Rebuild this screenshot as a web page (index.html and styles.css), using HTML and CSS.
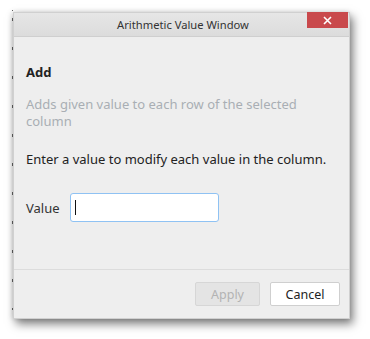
FILE: index.html
```html
<!DOCTYPE html>
<html lang="en">
<head>
    <meta charset="UTF-8">
    <title>Arithmetic Value Window</title>
    <link rel="stylesheet" href="styles.css">
</head>
<body>
    <div class="ticks"></div>
    <div class="window">
        <div class="titlebar">
            <span class="title">Arithmetic Value Window</span>
            <button class="close-btn" aria-label="Close">
                <svg width="9" height="9" viewBox="0 0 9 9">
                    <path d="M1 1 L8 8 M8 1 L1 8" stroke="#fff" stroke-width="1.6" fill="none"/>
                </svg>
            </button>
        </div>

        <div class="content">
            <h2 class="op-name">Add</h2>
            <p class="op-desc">Adds given value to each row of the selected column</p>
            <p class="prompt">Enter a value to modify each value in the column.</p>
            <div class="value-row">
                <label for="valueInput">Value</label>
                <div class="value-input" id="valueInput"><span class="caret"></span></div>
            </div>
        </div>

        <div class="footer">
            <button class="btn btn-disabled" disabled>Apply</button>
            <button class="btn">Cancel</button>
        </div>
    </div>
</body>
</html>
```

FILE: styles.css
```css
* {
    margin: 0;
    padding: 0;
    box-sizing: border-box;
    font-family: 'Noto Sans', 'Open Sans', sans-serif;
}

body {
    width: 370px;
    height: 339px;
    background: #fff;
    display: flex;
    align-items: flex-start;
    padding: 12px 0 0 12px;
    overflow: hidden;
}

.ticks {
    width: 1px;
    height: 300px;
    margin-top: -2px;
    background: repeating-linear-gradient(to bottom,
        #666 0, #666 3px, transparent 3px, transparent 29px);
    background-position: 0 8px;
}

.window {
    position: relative;
    width: 337px;
    height: 307px;
    display: flex;
    flex-direction: column;
    background: #eeeeee;
    border: 1px solid #d0d0d0;
    box-shadow: 3px 5px 9px rgba(0, 0, 0, 0.5), -1px 0 5px rgba(0, 0, 0, 0.15);
}

.titlebar {
    height: 24px;
    flex-shrink: 0;
    display: flex;
    justify-content: center;
    align-items: center;
    background: linear-gradient(#e6e6e6, #dcdcdc);
    border-bottom: 1px solid #cfcfcf;
}

.title {
    font-size: 11.2px;
    color: #333;
    margin-left: 3px;
}

.close-btn {
    position: absolute;
    top: -1px;
    right: 1px;
    width: 41px;
    height: 16px;
    border: none;
    background: #c9494c;
    display: flex;
    justify-content: center;
    align-items: center;
}

.content {
    flex: 1;
    padding: 26px 12px 0 12px;
}

.op-name {
    font-size: 13px;
    font-weight: 700;
    line-height: 18px;
    color: #222;
}

.op-desc {
    font-size: 13px;
    line-height: 17px;
    color: #a9aeb4;
    margin-top: 15px;
}

.prompt {
    font-size: 13px;
    line-height: 17px;
    color: #222;
    margin-top: 21px;
}

.value-row {
    display: flex;
    align-items: center;
    margin-top: 25px;
}

.value-row label {
    font-size: 13px;
    color: #333;
    width: 44px;
}

.value-input {
    width: 149px;
    height: 29px;
    background: #fff;
    border: 1px solid #8fc2f3;
    border-radius: 3px;
    display: flex;
    align-items: center;
    padding-left: 4px;
}

.caret {
    width: 1px;
    height: 15px;
    background: #111;
}

.footer {
    height: 49px;
    flex-shrink: 0;
    border-top: 1px solid #dcdcdc;
    display: flex;
    justify-content: flex-end;
    align-items: flex-start;
    gap: 10px;
    padding: 12px 9px 0 0;
}

.btn {
    width: 70px;
    height: 24px;
    font-size: 12.5px;
    color: #222;
    background: #fff;
    border: 1px solid #cfcfcf;
    border-radius: 2px;
}

.btn-disabled {
    width: 65px;
    color: #b3b3b3;
    background: #e4e4e4;
    border-color: #d6d6d6;
}
```
